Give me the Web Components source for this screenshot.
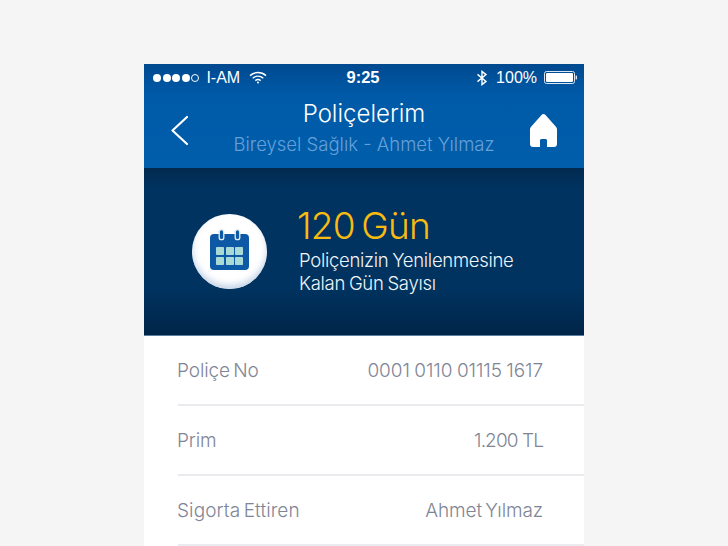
<!DOCTYPE html>
<html lang="tr">
<head>
<meta charset="utf-8">
<title>Poliçelerim</title>
<style>
  html, body { margin: 0; height: 546px; overflow: hidden; background: #f5f5f5; }
  body { font-family: Inter, "Noto Sans", sans-serif; }
</style>
</head>
<body>
<policy-screen>
  <header-band>
    <status-bar></status-bar>
    <nav-header heading="Poliçelerim" subtitle="Bireysel Sağlık - Ahmet Yılmaz"></nav-header>
  </header-band>
  <renewal-banner days="120 Gün">Poliçenizin Yenilenmesine<br>Kalan Gün Sayısı</renewal-banner>
  <info-row label="Poliçe No" value="0001 0110 01115 1617" style="--value-words: -0.7px"></info-row>
  <info-row label="Prim" value="1.200 TL" style="--value-track: -0.9px; --value-words: 0px"></info-row>
  <info-row label="Sigorta Ettiren" value="Ahmet Yılmaz" style="--label-track: 0.1px"></info-row>
</policy-screen>
<script>
class PolicyScreen extends HTMLElement {
  constructor() {
    super();
    const shadow = this.attachShadow({ mode: "open" });
    shadow.innerHTML = `
      <style>
        :host { display: block; width: 440px; height: 482px; margin: 64px 0 0 144px; background: #fff; overflow: hidden; }
      </style>
      <slot></slot>
    `;
  }
}

class HeaderBand extends HTMLElement {
  constructor() {
    super();
    const shadow = this.attachShadow({ mode: "open" });
    shadow.innerHTML = `
      <style>
        :host { display: block; height: 104px; background: linear-gradient(#00498f 0, #005aa8 30%, #005eab 100%); }
      </style>
      <slot></slot>
    `;
  }
}

class StatusBar extends HTMLElement {
  constructor() {
    super();
    const shadow = this.attachShadow({ mode: "open" });
    shadow.innerHTML = `
      <style>
        :host { display: grid; grid-template-columns: 1fr auto 1fr; align-items: center; height: 27px; padding: 0 7px 0 9px; color: #fff; font-size: 16px; font-family: "Liberation Sans", Arial, sans-serif; }
        .side { display: flex; align-items: center; }
        .right { justify-content: flex-end; }
        .dots { display: flex; gap: 1.6px; margin-right: 7px; }
        .dots i { width: 8px; height: 8px; border-radius: 50%; background: #fff; box-sizing: border-box; }
        .dots i.off { background: none; border: 1px solid #fff; }
        .time { font-weight: bold; font-size: 16.5px; margin-left: -4px; }
        svg { display: block; }
      </style>
      <div class="side">
        <span class="dots"><i></i><i></i><i></i><i></i><i class="off"></i></span>
        <span>I-AM</span>
        <svg width="18" height="13" viewBox="0 0 18 13" style="margin-left:9px" fill="none" stroke="#fff" stroke-width="1.5">
          <path d="M1 4.6C5.6 .6 12.4 .6 17 4.6"/>
          <path d="M3.7 7.2C6.8 4.6 11.2 4.6 14.3 7.2"/>
          <path d="M6.3 9.6C7.9 8.4 10.1 8.4 11.7 9.6"/>
          <circle cx="9" cy="11.6" r="1" fill="#fff" stroke="none"/>
        </svg>
      </div>
      <span class="time">9:25</span>
      <div class="side right">
        <svg width="12" height="16" viewBox="0 0 12 16" fill="none" stroke="#fff" stroke-width="1.4" style="margin-right:8px">
          <path d="M1.500 4.400 10 11.400 6 14.600V1.400L10 4.600 1.500 11.600"/>
        </svg>
        <span>100%</span>
        <svg width="33" height="13" viewBox="0 0 33 13" style="margin-left:7px">
          <rect x=".5" y=".5" width="30" height="12" rx="2" fill="none" stroke="#dbe6f2"/>
          <rect x="2" y="2" width="27" height="9" rx="1" fill="#fff"/>
          <rect x="31.6" y="4.6" width="1.4" height="3.8" fill="#dbe6f2"/>
        </svg>
      </div>
    `;
  }
}

class NavHeader extends HTMLElement {
  constructor() {
    super();
    const shadow = this.attachShadow({ mode: "open" });
    shadow.innerHTML = `
      <style>
        :host { display: grid; grid-template-columns: 72px 1fr 72px; align-items: center; height: 77px; color: #fff; }
        .back { justify-self: start; margin: 2px 0 0 26px; display: block; }
        .home { justify-self: end; margin: 2px 27px 0 0; display: block; }
        .titles { text-align: center; margin-top: -3px; white-space: nowrap; }
        h1 { margin: 0; font-size: 24px; line-height: 32px; font-weight: 300; }
        p { margin: 0; font-size: 18.5px; line-height: 28px; font-weight: 300; color: #66a0d8; }
      </style>
      <svg class="back" width="19" height="31" viewBox="0 0 19 31" fill="none" stroke="#fff" stroke-width="2.2" stroke-linecap="round" stroke-linejoin="round">
        <path d="M17 2 2.500 15.500 17 29"/>
      </svg>
      <div class="titles">
        <h1></h1>
        <p></p>
      </div>
      <svg class="home" width="27" height="33" viewBox="0 0 27 33">
        <path fill="#fff" d="M13.500 0c.8 0 1.400.4 2 1l10.200 11.500c.9 1 1.300 1.800 1.300 3V30c0 1.700-1.200 3-3 3H17v-6.500c0-.8-.7-1.500-1.500-1.500h-4c-.8 0-1.500.7-1.500 1.500V33H3c-1.800 0-3-1.300-3-3V15.500c0-1.200.4-2 1.300-3L11.500 1c.6-.6 1.200-1 2-1Z"/>
      </svg>
    `;
    shadow.querySelector("h1").textContent = this.getAttribute("heading");
    shadow.querySelector("p").textContent = this.getAttribute("subtitle");
  }
}

class RenewalBanner extends HTMLElement {
  constructor() {
    super();
    const shadow = this.attachShadow({ mode: "open" });
    shadow.innerHTML = `
      <style>
        :host { display: flex; align-items: center; box-sizing: border-box; height: 168px; padding: 0 0 1px 48px; gap: 31px; color: #fff;
          background: linear-gradient(#02294f 0, #003360 12%, #003360 72%, #002548 100%);
          border-bottom: 1px solid #5d7f9f; }
        .badge { flex: none; width: 75px; height: 75px; border-radius: 50%; display: flex; align-items: center; justify-content: center;
          background: #fff; box-shadow: inset 0 -4px 6px #c6d5e8; }
        .days { font-size: 37px; line-height: 46px; font-weight: 300; color: #f9bb10; letter-spacing: -0.8px; word-spacing: -3px; margin-left: -1px; }
        .text { font-size: 18.5px; line-height: 23px; font-weight: 300; letter-spacing: -0.3px; word-spacing: -1px; color: #f0f5fa; margin-left: 1px; }
        .info { margin-top: -4px; white-space: nowrap; }
      </style>
      <div class="badge">
        <svg width="39" height="41" viewBox="0 0 39 41" style="margin-top:-3px">
          <rect x="0" y="5" width="39" height="36" rx="4" fill="#0d59a5"/>
          <g fill="#0d59a5" stroke="#e3edf6" stroke-width="1.3">
            <rect x="9.200" y=".7" width="4.600" height="10" rx="2.300"/>
            <rect x="25.200" y=".7" width="4.600" height="10" rx="2.300"/>
          </g>
          <g fill="#a9dad5">
            <rect x="6" y="18" width="8" height="8" rx=".8"/>
            <rect x="16" y="18" width="8" height="8" rx=".8"/>
            <rect x="25" y="18" width="8" height="8" rx=".8"/>
            <rect x="6" y="28" width="8" height="8" rx=".8"/>
            <rect x="16" y="28" width="8" height="8" rx=".8"/>
            <rect x="25" y="28" width="8" height="8" rx=".8"/>
          </g>
        </svg>
      </div>
      <div class="info">
        <div class="days"></div>
        <div class="text"><slot></slot></div>
      </div>
    `;
    shadow.querySelector(".days").textContent = this.getAttribute("days");
  }
}

class InfoRow extends HTMLElement {
  constructor() {
    super();
    const shadow = this.attachShadow({ mode: "open" });
    shadow.innerHTML = `
      <style>
        :host { display: flex; justify-content: space-between; align-items: center; box-sizing: border-box; height: 70px; margin-left: 34px; padding-right: 41px; border-bottom: 2px solid #e9ebee; color: #7f8596; font-size: 19px; font-weight: 300; word-spacing: -2px; }
        .label { margin-left: -1px; letter-spacing: var(--label-track, -0.1px); }
        .value { letter-spacing: var(--value-track, -0.1px); word-spacing: var(--value-words, -2px); }
      </style>
      <span class="label"></span>
      <span class="value"></span>
    `;
    shadow.querySelector(".label").textContent = this.getAttribute("label");
    shadow.querySelector(".value").textContent = this.getAttribute("value");
  }
}

customElements.define("policy-screen", PolicyScreen);
customElements.define("header-band", HeaderBand);
customElements.define("status-bar", StatusBar);
customElements.define("nav-header", NavHeader);
customElements.define("renewal-banner", RenewalBanner);
customElements.define("info-row", InfoRow);
</script>
</body>
</html>
